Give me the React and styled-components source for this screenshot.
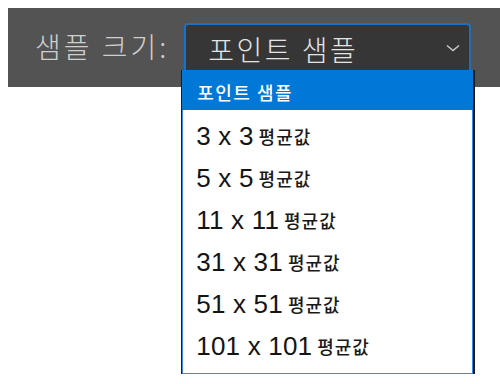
import React from "react";
import styled, { createGlobalStyle } from "styled-components";

const Global = createGlobalStyle`
  html, body { margin: 0; padding: 0; background: #ffffff; }
  body { font-family: "Noto Sans CJK KR", "Noto Sans", sans-serif; }
`;

const Page = styled.div`
  width: 500px;
  height: 384px;
  padding: 8px 0 0 8px;
  box-sizing: border-box;
  overflow: hidden;
`;

const Bar = styled.div`
  height: 79px;
  background: #535353;
  display: flex;
  align-items: flex-start;
  padding: 15px 0 0 27px;
  box-sizing: border-box;
  gap: 15px;
`;

const Label = styled.div`
  font-family: "Noto Sans CJK KR", sans-serif;
  font-weight: 300;
  font-size: 28px;
  line-height: 47px;
  color: #cfcfcf;
  letter-spacing: 3px;
`;

const SelectWrap = styled.div`
  position: relative;
  width: 287px;
`;

const Select = styled.div`
  height: 47px;
  box-sizing: border-box;
  border: 2px solid #1d6fc2;
  border-bottom: none;
  border-radius: 4px 4px 0 0;
  background: #363636;
  display: flex;
  align-items: center;
  justify-content: space-between;
  padding: 0 8px 0 22px;
`;

const SelectText = styled.span`
  font-family: "Noto Sans CJK KR", sans-serif;
  font-weight: 300;
  font-size: 28px;
  color: #e4e4e4;
  line-height: 1;
  margin-top: 2px;
  letter-spacing: 2.5px;
`;

const List = styled.div`
  position: absolute;
  top: 47px;
  left: -2px;
  width: 291px;
  height: 304px;
  box-sizing: border-box;
  background: #ffffff;
  border: 1px solid #3a8be0;
  border-top: none;
  box-shadow: -1px 0 0 #1e1e1e, 2px 0 0 #1a1a1a;
  display: flex;
  flex-direction: column;
`;

const Highlight = styled.div`
  height: 40px;
  background: #0078d7;
  margin: 0 -1px;
  display: flex;
  align-items: center;
  padding-left: 15px;
  padding-top: 3px;
  box-sizing: border-box;
  font-family: "Noto Sans CJK KR", sans-serif;
  font-weight: 500;
  font-size: 18px;
  color: #ffffff;
  letter-spacing: 1.5px;
`;

const Items = styled.div`
  padding-top: 5px;
  display: flex;
  flex-direction: column;
`;

const Item = styled.div`
  height: 42px;
  display: flex;
  align-items: center;
  padding-left: 13px;
  font-family: "Liberation Sans", Arial, sans-serif;
  font-size: 26px;
  letter-spacing: 0.2px;
  color: #141414;
  white-space: pre;
`;

const Suffix = styled.span`
  font-family: "Noto Sans CJK KR", sans-serif;
  font-size: 18px;
  font-weight: 500;
  color: #1a1a1a;
  margin-left: 5px;
  letter-spacing: 1px;
`;

const Chevron = () => (
  <svg width="16" height="10" viewBox="0 0 16 10">
    <path d="M2 2.5 L8 7.5 L14 2.5" fill="none" stroke="#c8c8c8" strokeWidth="1.5" />
  </svg>
);

const options = ["3 x 3", "5 x 5", "11 x 11", "31 x 31", "51 x 51", "101 x 101"];

export default function App() {
  return (
    <Page>
      <Global />
      <Bar>
        <Label>샘플 크기:</Label>
        <SelectWrap>
          <Select>
            <SelectText>포인트 샘플</SelectText>
            <Chevron />
          </Select>
          <List>
            <Highlight>포인트 샘플</Highlight>
            <Items>
              {options.map((o) => (
                <Item key={o}>
                  {o}
                  <Suffix>평균값</Suffix>
                </Item>
              ))}
            </Items>
          </List>
        </SelectWrap>
      </Bar>
    </Page>
  );
}
